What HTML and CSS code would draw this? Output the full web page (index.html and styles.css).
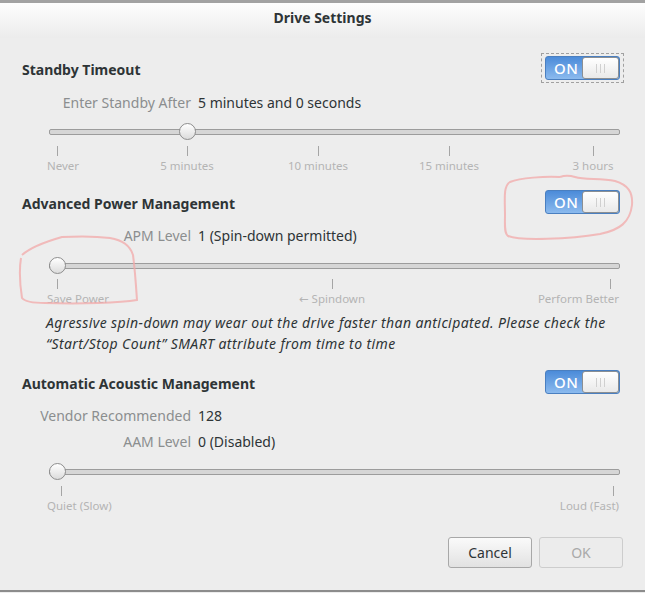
FILE: index.html
```html
<!DOCTYPE html>
<html>
<head>
<meta charset="utf-8">
<title>Drive Settings</title>
<link rel="stylesheet" href="styles.css">
</head>
<body>
<div class="window">
  <header class="titlebar"><h1>Drive Settings</h1></header>
  <main class="content">
    <section class="group">
      <div class="group-head">
        <h2>Standby Timeout</h2>
        <div class="focus-ring"><div class="switch"><span class="on">ON</span><span class="thumb"><i></i><i></i><i></i></span></div></div>
      </div>
      <div class="fields">
        <span class="key">Enter Standby After</span><span class="val">5 minutes and 0 seconds</span>
      </div>
      <div class="slider">
        <div class="trough"><span class="knob" style="left:142px"></span></div>
        <div class="marks">
          <span class="tick" style="left:12px"></span>
          <span class="tick" style="left:142px"></span>
          <span class="tick" style="left:273px"></span>
          <span class="tick" style="left:404px"></span>
          <span class="tick" style="left:548px"></span>
        </div>
        <div class="labels">
          <span class="lbl start" style="left:2px">Never</span>
          <span class="lbl mid" style="left:142px">5 minutes</span>
          <span class="lbl mid" style="left:273px">10 minutes</span>
          <span class="lbl mid" style="left:404px">15 minutes</span>
          <span class="lbl mid" style="left:548px">3 hours</span>
        </div>
      </div>
    </section>

    <section class="group g2">
      <div class="group-head">
        <h2>Advanced Power Management</h2>
        <div class="switch"><span class="on">ON</span><span class="thumb"><i></i><i></i><i></i></span></div>
      </div>
      <div class="fields">
        <span class="key">APM Level</span><span class="val">1 (Spin-down permitted)</span>
      </div>
      <div class="slider">
        <div class="trough"><span class="knob" style="left:12px"></span></div>
        <div class="marks">
          <span class="tick" style="left:12px"></span>
          <span class="tick" style="left:287px"></span>
          <span class="tick" style="left:565px"></span>
        </div>
        <div class="labels">
          <span class="lbl start" style="left:2px">Save Power</span>
          <span class="lbl mid" style="left:287px">← Spindown</span>
          <span class="lbl end" style="right:1px">Perform Better</span>
        </div>
      </div>
      <p class="warning">Agressive spin-down may wear out the drive faster than anticipated. Please check the “Start/Stop Count” SMART attribute from time to time</p>
    </section>

    <section class="group g3">
      <div class="group-head">
        <h2>Automatic Acoustic Management</h2>
        <div class="switch"><span class="on">ON</span><span class="thumb"><i></i><i></i><i></i></span></div>
      </div>
      <div class="fields two">
        <span class="key">Vendor Recommended</span><span class="val">128</span>
        <span class="key">AAM Level</span><span class="val">0 (Disabled)</span>
      </div>
      <div class="slider">
        <div class="trough"><span class="knob" style="left:12px"></span></div>
        <div class="marks">
          <span class="tick" style="left:16px"></span>
          <span class="tick" style="left:568px"></span>
        </div>
        <div class="labels">
          <span class="lbl start" style="left:2px">Quiet (Slow)</span>
          <span class="lbl end" style="right:1px">Loud (Fast)</span>
        </div>
      </div>
    </section>
  </main>
  <footer class="actions">
    <button class="btn">Cancel</button>
    <button class="btn disabled">OK</button>
  </footer>
  <svg class="annotations" width="645" height="593" viewBox="0 0 645 593">
    <path d="M560 177 C545 176 520 178 510 182 C503 186 505 200 505 215 C505 225 504 233 508 236 C520 241 570 239 600 234 C620 230 630 222 632 205 C633 192 628 185 615 181 C600 178 585 180 575 177 C568 175 563 176 560 177"/>
    <path d="M22 255 C32 246 48 241 62 237 C80 236 95 236 110 238 C122 240 130 245 133 255 C135 270 136 285 137 300 C120 303 80 304 45 303 C35 303 25 302 22 298 C20 285 19 270 21 258"/>
  </svg>
</div>
</body>
</html>
```

FILE: styles.css
```css
* { box-sizing: border-box; }
html, body { margin: 0; padding: 0; }
body {
  width: 645px;
  height: 593px;
  background: #ededed;
  font-family: "Noto Sans", "DejaVu Sans", sans-serif;
  font-size: 14px;
  color: #2e3436;
  overflow: hidden;
}
.window {
  position: relative;
  width: 645px;
  height: 592px;
  background: #ededed;
  border-bottom: 2px solid #8c8c8c;
  display: flex;
  flex-direction: column;
}
.titlebar {
  height: 38px;
  border-top: 3px solid #a2a2a2;
  background: linear-gradient(#fdfdfd, #ececec);
  display: flex;
  align-items: center;
  justify-content: center;
  padding-bottom: 6px;
}
.titlebar h1 {
  margin: 0;
  font-size: 14px;
  font-weight: bold;
  color: #2e3436;
}
.content {
  padding: 14px 25px 0 22px;
  flex: 1;
}
.group-head {
  height: 32px;
  display: flex;
  align-items: center;
  justify-content: space-between;
}
.group-head h2 {
  margin: 0;
  padding-top: 3px;
  font-size: 14px;
  font-weight: bold;
  color: #2e3436;
}
.focus-ring {
  border: 1px dashed #a0a0a0;
  padding: 2px 3px;
  margin-right: -4px;
}
.switch {
  width: 75px;
  height: 24px;
  border-radius: 3px;
  background: linear-gradient(#4b8bd9, #8bbaee);
  border: 1px solid #4a7fc0;
  display: flex;
  align-items: center;
  justify-content: space-between;
  position: relative;
}
.switch .on {
  color: #fff;
  font-size: 15px;
  font-weight: 500;
  padding-left: 8px;
  letter-spacing: 0.5px;
}
.switch .thumb {
  width: 37px;
  height: 22px;
  border: 1px solid #8b8f93;
  border-radius: 3px;
  background: linear-gradient(#ffffff, #e9e9e9);
  display: flex;
  align-items: center;
  justify-content: center;
  gap: 3px;
}
.switch .thumb i {
  width: 1px;
  height: 9px;
  background: #d0d0d0;
}
.fields {
  margin-top: 8px;
  display: grid;
  grid-template-columns: 146px auto;
  column-gap: 7px;
  row-gap: 4px;
  margin-left: 23px;
}
.fields .key {
  justify-self: end;
  text-align: right;
  color: #8b8e8f;
  line-height: 22px;
  white-space: nowrap;
}
.fields .val {
  color: #2e3436;
  line-height: 22px;
}
.slider {
  margin-top: 7px;
  margin-left: 23px;
  width: 575px;
}
.trough {
  position: relative;
  height: 20px;
  margin-left: 4px;
}
.trough::before {
  content: "";
  position: absolute;
  left: 0;
  right: 0;
  top: 8px;
  height: 4px;
  border-radius: 2px;
  background: #d6d6d6;
  border: 1px solid #9c9c9c;
}
.knob {
  position: absolute;
  top: 2px;
  width: 17px;
  height: 17px;
  margin-left: -12.5px;
  border-radius: 50%;
  border: 1px solid #8e8e8e;
  background: linear-gradient(#ffffff, #dcdcdc);
}
.marks {
  position: relative;
  height: 10px;
  margin-top: 5px;
}
.tick {
  position: absolute;
  top: 0;
  width: 1px;
  height: 10px;
  background: #a5a5a5;
}
.labels {
  position: relative;
  height: 16px;
  margin-top: 2px;
}
.lbl {
  position: absolute;
  top: 0;
  line-height: 16px;
  font-size: 11.5px;
  color: #b4b4b4;
  white-space: nowrap;
}
.lbl.mid { transform: translateX(-50%); }
.g2 { margin-top: 12px; }
.g2 .fields { margin-top: 7px; }
.g2 .slider { margin-top: 8px; }
.g2 .marks { margin-top: 4px; }
.warning {
  margin: 5px 0 0 24px;
  font-style: italic;
  line-height: 21px;
  letter-spacing: 0.4px;
  color: #2e3436;
}
.g3 { margin-top: 12px; }
.g3 .fields { margin-top: 7px; }
.g3 .slider { margin-top: 8px; }
.actions {
  display: flex;
  justify-content: flex-end;
  gap: 7px;
  padding: 0 22px 22px 0;
}
.btn {
  width: 84px;
  height: 31px;
  font-family: inherit;
  font-size: 14px;
  color: #2e3436;
  border: 1px solid #a8a8a8;
  border-radius: 3px;
  background: linear-gradient(#fafafa, #e2e2e2);
}
.btn.disabled {
  color: #a9a9a9;
  border-color: #cdcdcd;
  background: #ececec;
}
.annotations {
  position: absolute;
  left: 0;
  top: 0;
  pointer-events: none;
}
.annotations path {
  fill: none;
  stroke: #f2a8a8;
  stroke-width: 2;
  stroke-opacity: 0.75;
}
```
